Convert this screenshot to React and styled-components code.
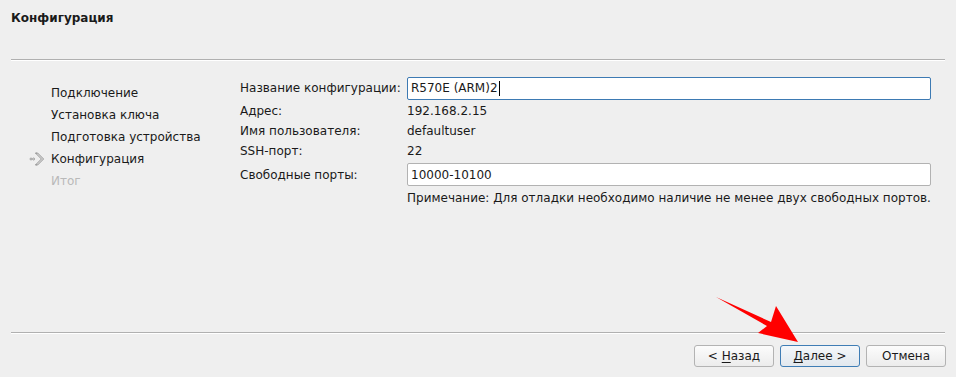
import React from 'react'
import styled, { createGlobalStyle } from 'styled-components'

const Global = createGlobalStyle`
  html, body {
    margin: 0;
    padding: 0;
    background: #efefef;
  }
  body {
    font-family: "DejaVu Sans", "Liberation Sans", sans-serif;
    font-size: 12px;
    color: #1a1a1a;
  }
`

const steps = [
  { name: 'Подключение' },
  { name: 'Установка ключа' },
  { name: 'Подготовка устройства' },
  { name: 'Конфигурация', current: true },
  { name: 'Итог', disabled: true },
]

function StepArrow() {
  return (
    <svg width="17" height="14" viewBox="0 0 17 14">
      <circle cx="2" cy="7" r="1" fill="none" stroke="#8c8c8c" strokeWidth="0.8" />
      <circle cx="4.6" cy="7" r="1" fill="none" stroke="#8c8c8c" strokeWidth="0.8" />
      <path d="M6.5 1 L12.5 7 L6.5 13 L8.5 13 L14.5 7 L8.5 1 Z" fill="#ffffff" stroke="#777777" strokeWidth="0.9" strokeLinejoin="round" />
    </svg>
  )
}

function RedArrow() {
  return (
    <ArrowLayer width="956" height="377" viewBox="0 0 956 377">
      <path
        d="M716 297 L771 322 L776 306 L798 342 L758 333 L767 326 Z"
        fill="#ff0000"
      />
    </ArrowLayer>
  )
}

export default function App() {
  return (
    <>
      <Global />
      <Window>
        <Header>
          <Title>Конфигурация</Title>
        </Header>
        <Separator />
        <Body>
          <Steps>
            {steps.map((s) => (
              <Step key={s.name} $disabled={s.disabled}>
                <Marker>{s.current && <StepArrow />}</Marker>
                {s.name}
              </Step>
            ))}
          </Steps>
          <Form>
            <Label $h="26px">Название конфигурации:</Label>
            <Field $h="26px">
              <Input $focused>
                R570E (ARM)2<Caret />
              </Input>
            </Field>
            <Label>Адрес:</Label>
            <Value>192.168.2.15</Value>
            <Label>Имя пользователя:</Label>
            <Value>defaultuser</Value>
            <Label>SSH-порт:</Label>
            <Value>22</Value>
            <Label $h="27px">Свободные порты:</Label>
            <Field $h="27px">
              <Input>10000-10100</Input>
            </Field>
            <span />
            <Value>Примечание: Для отладки необходимо наличие не менее двух свободных портов.</Value>
          </Form>
        </Body>
        <Separator />
        <Footer>
          <Button>
            &lt; <u>Н</u>азад
          </Button>
          <Button $default>
            <u>Д</u>алее &gt;
          </Button>
          <Button>Отмена</Button>
        </Footer>
        <RedArrow />
      </Window>
    </>
  )
}

const Window = styled.div`
  position: relative;
  width: 956px;
  height: 377px;
  display: flex;
  flex-direction: column;
  overflow: hidden;
`

const Header = styled.div`
  height: 59px;
  padding: 10px 11px 0;
  box-sizing: border-box;
`

const Title = styled.div`
  font-weight: bold;
  font-size: 12px;
  line-height: 16px;
`

const Separator = styled.div`
  margin: 0 11px;
  height: 1px;
  background: #b0b0b0;
  border-bottom: 1px solid #ffffff;
`

const Body = styled.div`
  flex: 1;
  display: flex;
  padding-top: 14px;
`

const Steps = styled.div`
  width: 240px;
  padding: 7px 0 0 29px;
  box-sizing: border-box;
  display: flex;
  flex-direction: column;
`

const Step = styled.div`
  height: 22px;
  display: flex;
  align-items: center;
  color: ${(p) => (p.$disabled ? '#b9b9b9' : '#1a1a1a')};
`

const Marker = styled.span`
  width: 22px;
  display: flex;
  align-items: center;
`

const Form = styled.div`
  flex: 1;
  padding-right: 25px;
  display: grid;
  grid-template-columns: 167px 1fr;
  align-content: start;
  align-items: center;
`

const Label = styled.div`
  height: ${(p) => p.$h || '20px'};
  display: flex;
  align-items: center;
`

const Value = styled.div`
  height: 20px;
  display: flex;
  align-items: center;
`

const Field = styled.div`
  height: ${(p) => p.$h || '26px'};
  display: flex;
  align-items: center;
`

const Input = styled.div`
  flex: 1;
  height: 23px;
  box-sizing: border-box;
  background: #ffffff;
  border: 1px solid ${(p) => (p.$focused ? '#3d7ab3' : '#b2b2b2')};
  border-radius: 2px;
  padding: 0 3px;
  display: flex;
  align-items: center;
  white-space: pre;
`

const Caret = styled.span`
  width: 1px;
  height: 15px;
  background: #000;
  margin-left: 1px;
`

const Footer = styled.div`
  height: 43px;
  box-sizing: border-box;
  display: flex;
  justify-content: flex-end;
  gap: 6px;
  padding: 11px 10px 0;
`

const Button = styled.button`
  width: 80px;
  height: 22px;
  font-family: inherit;
  font-size: 12px;
  color: #1a1a1a;
  border: 1px solid ${(p) => (p.$default ? '#3f7db5' : '#b3b3b3')};
  border-radius: 3px;
  background: ${(p) =>
    p.$default
      ? 'linear-gradient(#f4f7fa, #e2e8ee)'
      : 'linear-gradient(#fcfcfc, #ececec)'};
  padding: 0;
  u {
    text-decoration-thickness: 1px;
    text-underline-offset: 2px;
  }
`

const ArrowLayer = styled.svg`
  position: absolute;
  left: 0;
  top: 0;
  pointer-events: none;
`
